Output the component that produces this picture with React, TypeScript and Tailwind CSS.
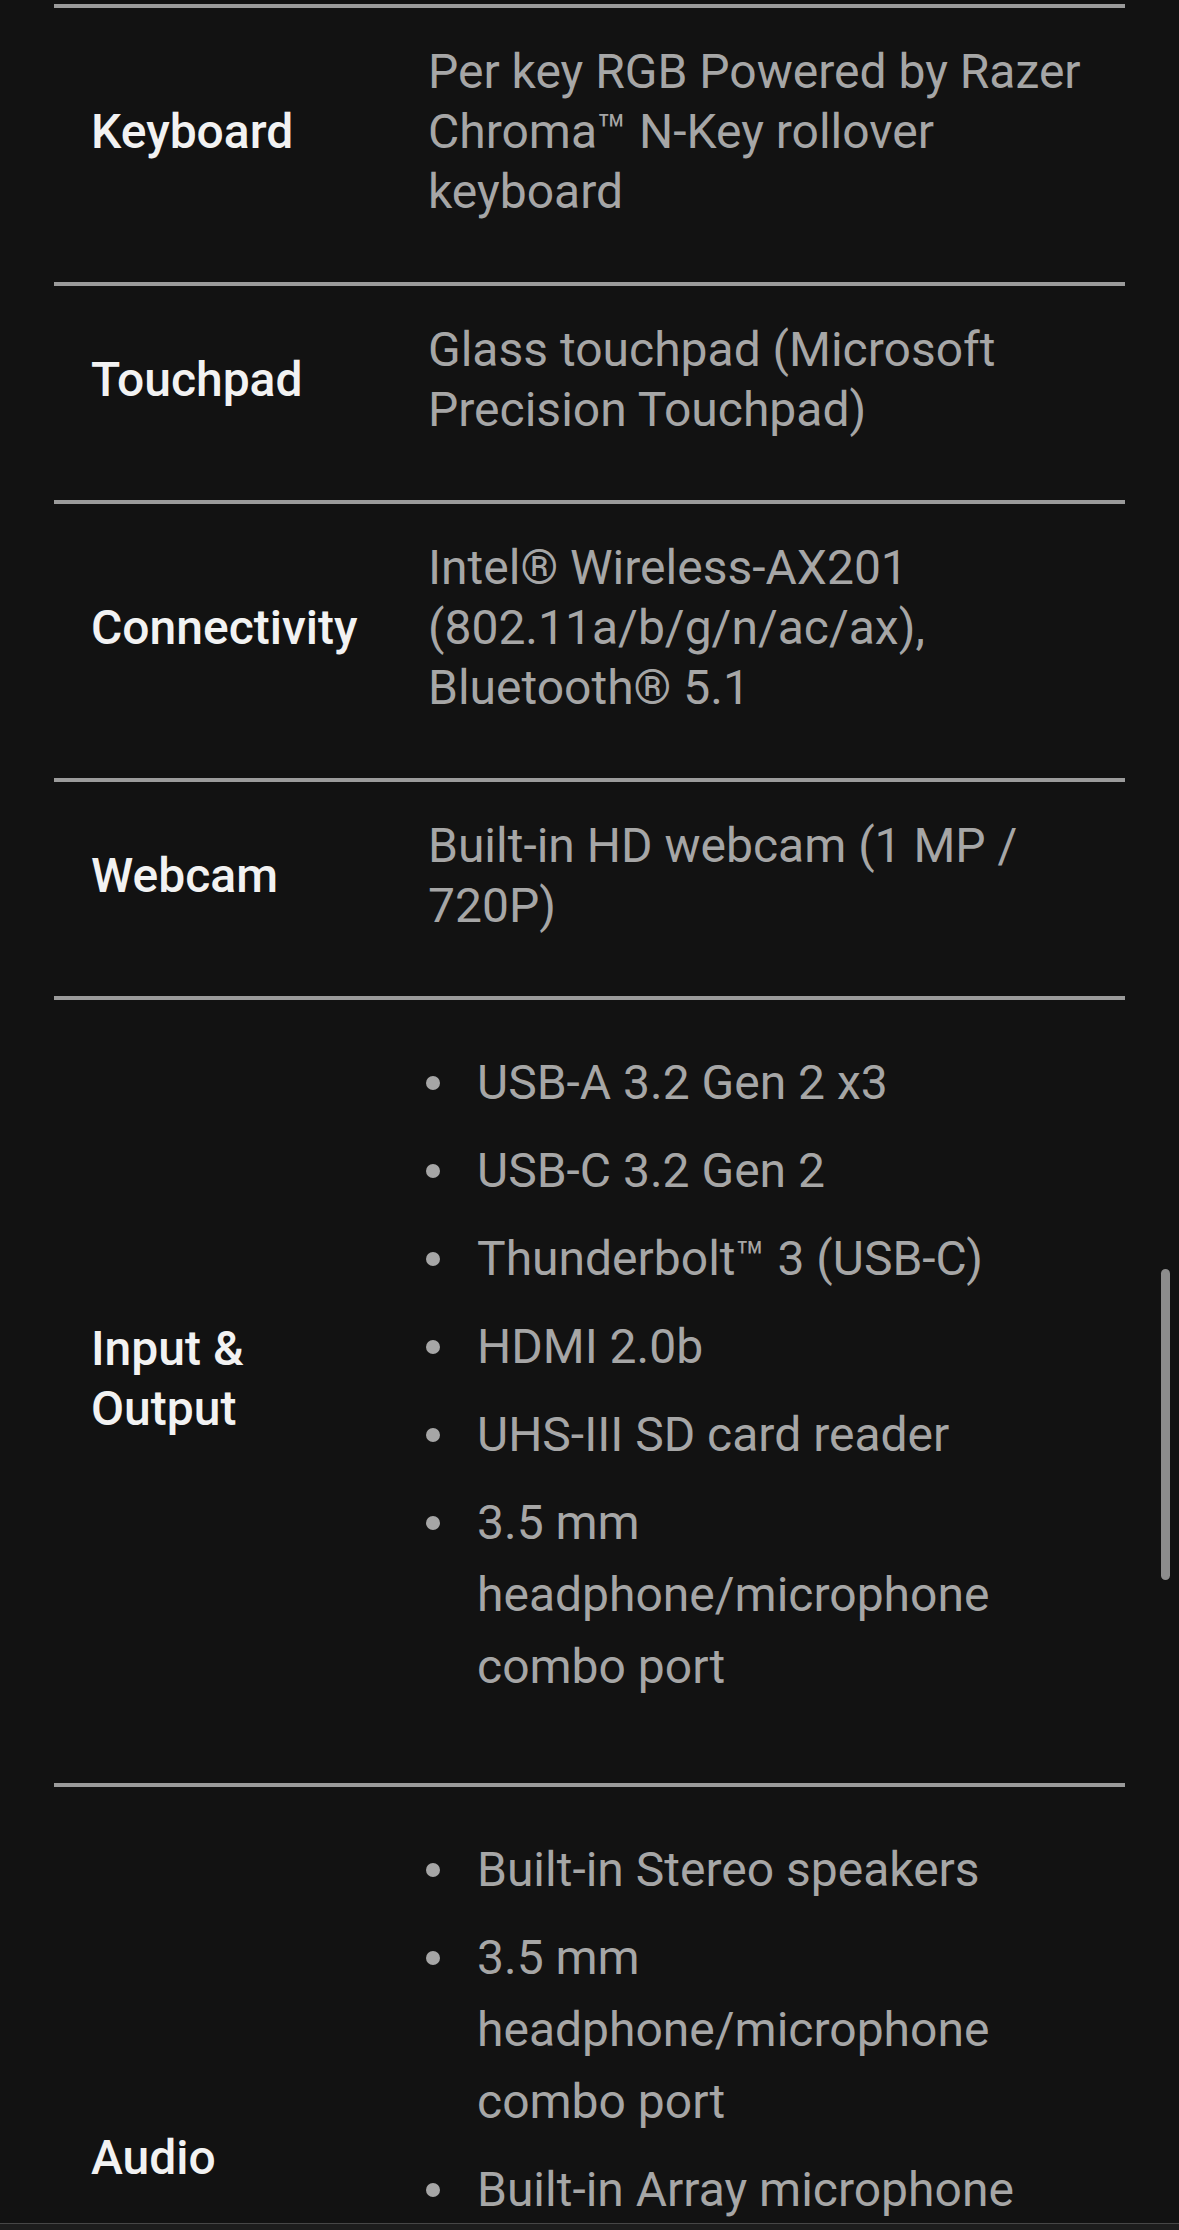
import React from "react";

type Spec = {
  label: string[];
  value?: string;
  items?: string[];
};

const specs: Spec[] = [
  { label: ["Keyboard"], value: "Per key RGB Powered by Razer Chroma™ N-Key rollover keyboard" },
  { label: ["Touchpad"], value: "Glass touchpad (Microsoft Precision Touchpad)" },
  { label: ["Connectivity"], value: "Intel® Wireless-AX201 (802.11a/b/g/n/ac/ax), Bluetooth® 5.1" },
  { label: ["Webcam"], value: "Built-in HD webcam (1 MP / 720P)" },
  {
    label: ["Input &", "Output"],
    items: [
      "USB-A 3.2 Gen 2 x3",
      "USB-C 3.2 Gen 2",
      "Thunderbolt™ 3 (USB-C)",
      "HDMI 2.0b",
      "UHS-III SD card reader",
      "3.5 mm headphone/microphone combo port",
    ],
  },
  {
    label: ["Audio"],
    items: [
      "Built-in Stereo speakers",
      "3.5 mm headphone/microphone combo port",
      "Built-in Array microphone",
      "THX® Spatial Audio",
      "7.1 codec support (via HDMI output)",
    ],
  },
];

export default function App() {
  return (
    <div className="relative h-[2230px] w-full flex flex-col bg-[#121212] overflow-hidden font-['Roboto','Liberation_Sans',sans-serif]">
      {/* Spec table */}
      <div className="flex-1 overflow-hidden pt-[4px] px-[54px]">
        {specs.map((spec, i) => (
          <div
            key={i}
            className="flex items-center border-t-[4px] border-[#9b9b9b] pt-[34px] pb-[60px]"
          >
            <div className="w-[374px] shrink-0 pl-[37px] text-[#f2f2f2] font-medium text-[48px] leading-[60px]">
              {spec.label.map((l) => (
                <div key={l}>{l}</div>
              ))}
            </div>
            <div className="flex-1 text-[#a6a6a6] text-[48px]">
              {spec.value ? (
                <p className="leading-[60px]">{spec.value}</p>
              ) : (
                <ul className="flex flex-col gap-[16px] pt-[13px] pb-[20px]">
                  {spec.items?.map((item) => (
                    <li key={item} className="flex">
                      <div className="w-[49px] h-[72px] shrink-0 flex items-center">
                        <span className="block w-[14px] h-[14px] rounded-full bg-[#a6a6a6] -ml-[2px]" />
                      </div>
                      <span className="leading-[72px]">{item}</span>
                    </li>
                  ))}
                </ul>
              )}
            </div>
          </div>
        ))}
      </div>

      {/* bottom nav edge */}
      <div className="h-[7px] shrink-0 border-t border-[#474747] bg-[#1d1d1d]" />

      {/* scroll thumb */}
      <div className="absolute left-[1161px] top-[1269px] w-[9px] h-[311px] rounded-full bg-[#8c8c8c]" />
    </div>
  );
}
